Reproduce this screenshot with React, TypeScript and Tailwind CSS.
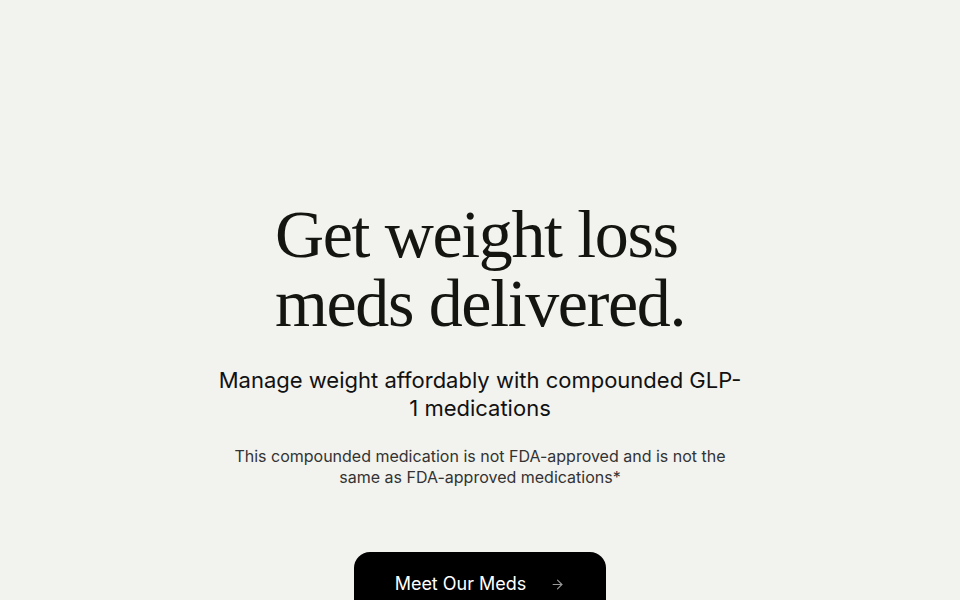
import React from 'react';
import { ArrowRight } from 'lucide-react';

const App: React.FC = () => {
  return (
    <div className="min-h-screen w-full bg-[#f2f2ee] flex flex-col items-center pt-[200px] overflow-hidden font-['Inter','Liberation_Sans',sans-serif]">
      <h1 className="text-left text-[68px] leading-[69px] tracking-[-0.02em] text-[#141410] font-['Liberation_Serif','DejaVu_Serif',serif]">
        Get weight loss
        <br />
        meds delivered.
      </h1>
      <p className="mt-[28px] max-w-[528px] text-center text-[22px] leading-[28px] text-[#111]">
        Manage weight affordably with compounded GLP-1 medications
      </p>
      <p className="mt-[24px] max-w-[500px] text-center text-[16px] leading-[21px] text-[#333]">
        This compounded medication is not FDA-approved and is not the same as FDA-approved medications*
      </p>
      <button className="mt-[64px] flex items-center gap-6 rounded-2xl bg-black px-[41px] pt-[20px] pb-[20px] text-[18px] leading-[24px] text-white">
        Meet Our Meds
        <ArrowRight className="h-[15px] w-[15px] text-[#9a9a9a]" strokeWidth={1.75} />
      </button>
    </div>
  );
};

export default App;
